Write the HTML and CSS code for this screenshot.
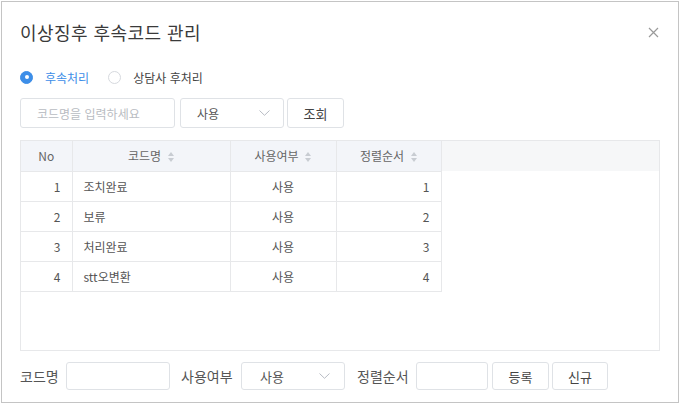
FILE: index.html
```html
<!DOCTYPE html>
<html lang="ko">
<head>
<meta charset="utf-8">
<link rel="stylesheet" href="styles.css">
</head>
<body>
<div class="dialog">
  <div class="title-row">
    <h1 class="title">이상징후 후속코드 관리</h1>
    <button class="close" aria-label="닫기">
      <svg width="11" height="11" viewBox="0 0 11 11"><path d="M1 1L10 10M10 1L1 10" stroke="#9a9a9a" stroke-width="1.2" fill="none"/></svg>
    </button>
  </div>
  <div class="radio-row">
    <label class="radio checked"><span class="dot"></span><span class="rlabel">후속처리</span></label>
    <label class="radio"><span class="dot"></span><span class="rlabel">상담사 후처리</span></label>
  </div>
  <div class="search-row">
    <div class="input search-input"><span class="ph">코드명을 입력하세요</span></div>
    <div class="input select search-select"><span>사용</span>
      <svg class="chev" width="11" height="6" viewBox="0 0 11 6"><path d="M0.5 0.5L5.5 5.3L10.5 0.5" stroke="#b8bcc4" stroke-width="1" fill="none"/></svg>
    </div>
    <button class="btn search-btn">조회</button>
  </div>
  <div class="table-box">
    <div class="head-fill"></div>
    <table class="grid">
      <thead>
        <tr>
          <th class="c-no">No</th>
          <th class="c-name">코드명<span class="sort"></span></th>
          <th class="c-use">사용여부<span class="sort"></span></th>
          <th class="c-ord">정렬순서<span class="sort"></span></th>
        </tr>
      </thead>
      <tbody>
        <tr><td class="r">1</td><td class="l">조치완료</td><td class="c">사용</td><td class="r">1</td></tr>
        <tr><td class="r">2</td><td class="l">보류</td><td class="c">사용</td><td class="r">2</td></tr>
        <tr><td class="r">3</td><td class="l">처리완료</td><td class="c">사용</td><td class="r">3</td></tr>
        <tr><td class="r">4</td><td class="l">stt오변환</td><td class="c">사용</td><td class="r">4</td></tr>
      </tbody>
    </table>
  </div>
  <div class="form-row">
    <span class="flabel l1">코드명</span>
    <div class="input f-name"></div>
    <span class="flabel l2">사용여부</span>
    <div class="input select f-use"><span>사용</span>
      <svg class="chev" width="11" height="6" viewBox="0 0 11 6"><path d="M0.5 0.5L5.5 5.3L10.5 0.5" stroke="#b8bcc4" stroke-width="1" fill="none"/></svg>
    </div>
    <span class="flabel l3">정렬순서</span>
    <div class="input f-ord"></div>
    <button class="btn f-reg">등록</button>
    <button class="btn f-new">신규</button>
  </div>
</div>
</body>
</html>
```

FILE: styles.css
```css
* { box-sizing: border-box; }
html, body { margin: 0; padding: 0; background: #fff; }
body {
  font-family: "Noto Sans CJK KR", "Noto Sans", sans-serif;
  color: #606266;
  font-size: 12px;
}
.dialog {
  margin: 1px 0 0 1px;
  width: 678px;
  height: 402px;
  border: 1px solid #c4c4c4;
  padding: 18px 18px 0 18px;
  display: flex;
  flex-direction: column;
}
.title-row {
  height: 24px;
  display: flex;
  align-items: center;
  justify-content: space-between;
}
.title {
  margin: 0;
  font-size: 18px;
  font-weight: 400;
  line-height: 24px;
  color: #3a3a3a;
  letter-spacing: 0.45px;
}
.close {
  border: 0;
  background: none;
  padding: 0;
  width: 11px;
  height: 11px;
  margin-right: 1px;
  margin-top: 1px;
  display: flex;
}
.radio-row {
  margin-top: 23px;
  height: 20px;
  display: flex;
  align-items: center;
}
.radio {
  display: flex;
  align-items: center;
  margin-right: 19px;
  font-size: 12px;
  color: #444;
}
.radio .dot {
  width: 13px;
  height: 13px;
  border-radius: 50%;
  border: 1px solid #d6d9de;
  background: #fff;
  position: relative;
  margin-right: 12px;
}
.radio.checked .dot {
  border-color: #3d8ee8;
  background: #3d8ee8;
}
.radio.checked .dot::after {
  content: "";
  position: absolute;
  left: 50%;
  top: 50%;
  width: 4px;
  height: 4px;
  margin: -2px 0 0 -2px;
  background: #fff;
  border-radius: 50%;
}
.radio.checked .rlabel { color: #3d8ee8; }
.search-row {
  margin-top: 11px;
  height: 30px;
  display: flex;
}
.input {
  height: 100%;
  border: 1px solid #dfe2e6;
  border-radius: 3px;
  background: #fff;
  display: flex;
  align-items: center;
  padding: 0 14px;
  font-size: 12px;
  color: #555;
}
.ph { color: #b9bcc2; }
.search-input { width: 155px; padding-left: 16px; }
.search-select { width: 104px; margin-left: 5px; justify-content: space-between; padding-left: 16px; padding-right: 13px; }
.btn {
  font-family: inherit;
  font-size: 12px;
  color: #444;
  background: #fff;
  border: 1px solid #dfe2e6;
  border-radius: 3px;
  height: 100%;
  padding: 0;
}
.search-btn { width: 57px; margin-left: 3px; font-size: 13px; }
.table-box {
  margin-top: 12px;
  height: 211px;
  border: 1px solid #e7e8ea;
  position: relative;
}
.head-fill {
  position: absolute;
  left: 0;
  right: 0;
  top: 0;
  height: 30px;
  background: #f6f7f8;
}
.grid {
  position: relative;
  border-collapse: collapse;
  table-layout: fixed;
  width: 420px;
}
.grid th, .grid td {
  height: 30px;
  padding: 0 11px;
  border-right: 1px solid #e7e8ea;
  border-bottom: 1px solid #e7e8ea;
  font-weight: 400;
  font-size: 12px;
  white-space: nowrap;
}
.grid th {
  height: 30px;
  background: #f3f5f9;
  color: #666;
  text-align: center;
}
.grid td { color: #555; }
.c-no { width: 51px; }
.c-name { width: 158px; }
.c-use { width: 106px; }
.c-ord { width: 105px; }
.grid td.r { text-align: right; }
.grid td.l { text-align: left; }
.grid td.c { text-align: center; }
.sort {
  display: inline-block;
  width: 7px;
  height: 10px;
  margin-left: 6px;
  vertical-align: -1px;
  position: relative;
}
.sort::before, .sort::after {
  content: "";
  position: absolute;
  left: 0.5px;
  border-left: 3px solid transparent;
  border-right: 3px solid transparent;
}
.sort::before { top: 0; border-bottom: 4px solid #c8ccd2; }
.sort::after { bottom: 0; border-top: 4px solid #c8ccd2; }
.form-row {
  margin-top: 11px;
  height: 28px;
  display: flex;
  align-items: center;
}
.form-row .input, .form-row .btn { font-size: 13px; }
.flabel { font-size: 14px; color: #555; flex: none; white-space: nowrap; }
.l1 { width: 46px; }
.f-name { width: 104px; }
.l2 { margin-left: 11px; width: 60px; }
.f-use { width: 104px; justify-content: space-between; padding-left: 18px; padding-right: 14px; }
.l3 { margin-left: 12px; width: 59px; }
.f-ord { width: 72px; }
.f-reg { width: 57px; margin-left: 4px; }
.f-new { width: 56px; margin-left: 3px; }
```
